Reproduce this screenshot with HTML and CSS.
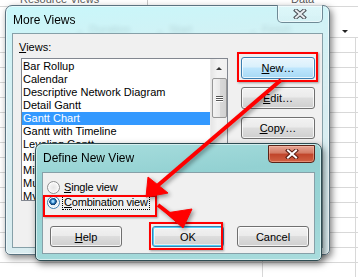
FILE: index.html
```html
<!DOCTYPE html>
<html lang="en">
<head>
  <meta charset="UTF-8" />
  <meta name="viewport" content="width=device-width, initial-scale=1.0"/>
  <title>More Views</title>
  <link rel="stylesheet" href="styles.css">
</head>
<body>
  <div class="sheet">
    <div class="sheet-top">
      <span class="tab-res">Resource Views</span>
      <span class="tab-data">Data</span>
    </div>
    <div class="col-heads">
      <span class="col col-dur"><i class="dd"></i>Duration</span>
      <span class="col col-start"><i class="dd"></i>Start</span>
      <span class="col col-fin"><i class="dd"></i>Finish</span>
      <span class="col"><i class="dd dd-dark"></i></span>
    </div>
    <div class="rows"></div>
  </div>

  <!-- back dialog -->
  <div class="win win-more">
    <div class="titlebar">
      <span class="title">More Views</span>
      <span class="close close-idle">
        <svg width="14" height="10" viewBox="0 0 14 10">
          <path d="M3 1.5 L11 8.5 M11 1.5 L3 8.5" stroke="#4b4f55" stroke-width="4" stroke-linecap="square"/>
          <path d="M3 1.5 L11 8.5 M11 1.5 L3 8.5" stroke="#e9edf0" stroke-width="2" stroke-linecap="square"/>
        </svg>
      </span>
    </div>
    <div class="client client-more">
      <div class="views">
        <div class="label"><u>V</u>iews:</div>
        <div class="listbox">
          <ul class="items">
            <li>Bar Rollup</li>
            <li>Calendar</li>
            <li>Descriptive Network Diagram</li>
            <li>Detail Gantt</li>
            <li class="sel">Gantt Chart</li>
            <li>Gantt with Timeline</li>
            <li>Leveling Gantt</li>
            <li>Milestone Date Rollup</li>
            <li>Milestone Rollup</li>
            <li>Multiple Baselines Gantt</li>
            <li>My Tasks</li>
          </ul>
          <div class="vscroll">
            <span class="sb-up"></span>
            <span class="sb-thumb"><i></i><i></i><i></i></span>
          </div>
        </div>
      </div>
      <div class="side-btns">
        <button class="btn btn-hot"><u>N</u>ew…</button>
        <button class="btn"><u>E</u>dit…</button>
        <button class="btn"><u>C</u>opy…</button>
      </div>
    </div>
  </div>

  <!-- front dialog -->
  <div class="win win-define">
    <div class="titlebar">
      <span class="title">Define New View</span>
      <span class="close close-hot">
        <svg width="14" height="10" viewBox="0 0 14 10">
          <path d="M3 1.5 L11 8.5 M11 1.5 L3 8.5" stroke="#5a1d12" stroke-width="4" stroke-linecap="square"/>
          <path d="M3 1.5 L11 8.5 M11 1.5 L3 8.5" stroke="#ffffff" stroke-width="2" stroke-linecap="square"/>
        </svg>
      </span>
    </div>
    <div class="client client-define">
      <div class="radios">
        <label class="radio"><span class="dot"></span><span><u>S</u>ingle view</span></label>
        <label class="radio"><span class="dot on"></span><span class="focus"><u>C</u>ombination view</span></label>
      </div>
      <div class="btn-row">
        <button class="btn"><u>H</u>elp</button>
        <button class="btn btn-def">OK</button>
        <button class="btn">Cancel</button>
      </div>
    </div>
  </div>

  <!-- annotations -->
  <div class="mark mark-new"></div>
  <div class="mark mark-comb"></div>
  <div class="mark mark-ok"></div>

  <svg class="arrows" width="358" height="277" viewBox="0 0 358 277">
    <g fill="#f00" stroke="#f00">
      <line x1="281" y1="80" x2="156" y2="187" stroke-width="4"/>
      <polygon points="146,197 148,177 168,193" stroke-width="1"/>
      <line x1="158" y1="205" x2="176" y2="219" stroke-width="4"/>
      <polygon points="183,228 166,213 192,209" stroke-width="1"/>
    </g>
  </svg>
</body>
</html>
```

FILE: styles.css
```css
* {
  box-sizing: border-box;
}

body {
  margin: 0;
  width: 358px;
  height: 277px;
  overflow: hidden;
  position: relative;
  background: #fff;
  font-family: 'Liberation Sans', Arial, sans-serif;
  font-size: 11px;
  color: #000;
}

u {
  text-decoration: underline;
  text-underline-offset: 1px;
}

/* spreadsheet behind the dialogs */
.sheet {
  height: 277px;
}

.sheet-top {
  display: flex;
  height: 6px;
  overflow: hidden;
  color: #5a5a5a;
  line-height: 12px;
}

.tab-res {
  width: 148px;
  padding-left: 20px;
  margin-top: -7px;
  border-right: 1px solid #c8c8c8;
}

.tab-data {
  padding-left: 143px;
  margin-top: -7px;
}

.col-heads {
  display: flex;
  height: 32px;
  padding-left: 77px;
  padding-top: 15px;
  color: #444;
  border-top: 1px solid #d8d8d8;
  border-bottom: 1px solid #d8d8d8;
}

.col {
  display: flex;
  align-items: center;
  gap: 6px;
  height: 14px;
}

.col-dur { width: 80px; }
.col-start { width: 93px; }
.col-fin { width: 92px; }

.dd {
  width: 0;
  height: 0;
  border-left: 3px solid transparent;
  border-right: 3px solid transparent;
  border-top: 3px solid #777;
  margin-top: 6px;
}

.dd-dark {
  border-top-color: #222;
  margin-top: 4px;
}

.rows {
  height: 239px;
  background:
    linear-gradient(to right, transparent 262px, #d8d8d8 262px 263px, transparent 263px 355px, #d8d8d8 355px 356px, transparent 356px),
    repeating-linear-gradient(to bottom, transparent 0 14px, #d8d8d8 14px 15px);
}

/* dialog windows */
.win {
  position: absolute;
  display: flex;
  flex-direction: column;
  padding: 0 6px 6px;
  border: 1px solid #5b7380;
  border-radius: 7px 7px 5px 5px;
  box-shadow: 2px 3px 7px rgba(0, 0, 0, 0.5), inset 0 0 0 1px rgba(255, 255, 255, 0.55);
}

.win-more {
  left: 5px;
  top: 5px;
  width: 325px;
  height: 250px;
  background: linear-gradient(175deg, rgba(190, 246, 250, 0.85), rgba(200, 240, 244, 0.85) 15%, rgba(212, 236, 240, 0.9) 40%, rgba(214, 234, 238, 0.92));
  backdrop-filter: blur(2px);
}

.win-define {
  left: 35px;
  top: 143px;
  width: 287px;
  height: 118px;
  border-color: #2e4c52;
  background: linear-gradient(175deg, #a8dede, #93d1d2 30%, #9cd5d6 70%, #a9dcdd);
}

.titlebar {
  display: flex;
  align-items: flex-start;
  height: 27px;
  flex-shrink: 0;
}

.win-define .titlebar {
  height: 28px;
}

.title {
  padding: 7px 0 0 1px;
  font-size: 12px;
  line-height: 14px;
}

.close {
  margin-left: auto;
  margin-top: -1px;
  width: 46px;
  height: 18px;
  display: flex;
  align-items: center;
  justify-content: center;
  border: 1px solid #6f8a96;
  border-top: none;
  border-radius: 0 0 5px 5px;
}

.close-idle {
  background: linear-gradient(rgba(255, 255, 255, 0.35), rgba(220, 240, 244, 0.4));
  box-shadow: inset 0 0 0 1px rgba(255, 255, 255, 0.5);
}

.close-hot {
  width: 47px;
  margin-top: 1px;
  border: 1px solid #5a2318;
  border-radius: 0 0 4px 4px;
  background: linear-gradient(#e8a595, #d37a63 45%, #c0442a 50%, #d06244);
  box-shadow: inset 0 0 0 1px rgba(255, 200, 180, 0.45);
}

.client {
  flex: 1;
  border: 1px solid #86a0a8;
  background: #f0f0f0;
}

/* More Views content */
.client-more {
  display: flex;
  padding: 7px 6px 0;
}

.label {
  line-height: 13px;
}

.listbox {
  display: flex;
  margin: 4px 0 0 2px;
  width: 207px;
  height: 143px;
  border: 1px solid #828790;
  background: #fff;
}

.items {
  list-style: none;
  margin: 0;
  padding: 1px 0 0;
  width: 189px;
  line-height: 13px;
  white-space: nowrap;
  overflow: hidden;
}

.items li {
  padding-left: 1px;
}

.items .sel {
  background: #3399ff;
  color: #fff;
}

.vscroll {
  width: 17px;
  display: flex;
  flex-direction: column;
  align-items: center;
  background: linear-gradient(to right, #e6e6e6, #f3f3f3 40%, #f0f0f0);
  border-left: 1px solid #ececec;
}

.sb-up {
  margin-top: 8px;
  width: 0;
  height: 0;
  border-left: 3px solid transparent;
  border-right: 3px solid transparent;
  border-bottom: 3px solid #333;
}

.sb-thumb {
  margin-top: 8px;
  width: 15px;
  height: 40px;
  border: 1px solid #979797;
  border-radius: 2px;
  background: linear-gradient(to right, #f3f3f3, #e8e8e8 50%, #d9d9d9 51%, #d2d2d2);
  display: flex;
  flex-direction: column;
  align-items: center;
  justify-content: center;
  gap: 1px;
}

.sb-thumb i {
  width: 7px;
  height: 1px;
  background: #555;
  box-shadow: 0 1px 0 #fff;
}

.side-btns {
  display: flex;
  flex-direction: column;
  gap: 8px;
  margin: 16px 0 0 13px;
}

.btn {
  width: 74px;
  height: 22px;
  padding: 0;
  border: 1px solid #707070;
  border-radius: 3px;
  background: linear-gradient(#f2f2f2, #ebebeb 45%, #dddddd 50%, #cfcfcf);
  box-shadow: inset 0 0 0 1px rgba(255, 255, 255, 0.75);
  font-family: 'Liberation Sans', Arial, sans-serif;
  font-size: 11px;
  color: #000;
}

.btn-hot {
  border-color: #3c7fb1;
  background: linear-gradient(#eaf6fd, #d9f0fc 45%, #bee6fd 50%, #a7d9f5);
}

.btn-def {
  border-color: #3c7fb1;
  box-shadow: inset 0 0 0 1px #48d0fa, inset 0 0 0 2px rgba(255, 255, 255, 0.6);
}

/* Define New View content */
.client-define {
  display: flex;
  flex-direction: column;
  padding: 8px 0 0 4px;
}

.radios {
  display: flex;
  flex-direction: column;
  gap: 2px;
}

.radio {
  display: flex;
  align-items: center;
  gap: 4px;
  height: 13px;
  line-height: 13px;
  letter-spacing: -0.2px;
}

.dot {
  width: 13px;
  height: 13px;
  border-radius: 50%;
  border: 1px solid #8e8f8f;
  background: radial-gradient(circle at 50% 50%, #e6e6e6, #f6f6f6 60%, #dcdcdc);
  box-shadow: inset 0 0 0 1px #fff;
}

.dot.on {
  border-color: #3c7fb1;
  background: radial-gradient(circle at 45% 40%, #9fd9ff 0 1px, #2a7cc0 2px, #0d3c6e 3.5px, #e9f1f6 4px, #d6e4ee);
}

.focus {
  outline: 1px dotted #000;
  outline-offset: 0;
  padding: 0 1px;
  margin-left: -1px;
}

.btn-row {
  display: flex;
  margin: 17px 0 0 3px;
}

.btn-row .btn {
  width: 72px;
  height: 21px;
}

.btn-row .btn-def {
  margin-left: 30px;
  margin-right: 13px;
}

/* red annotations */
.mark {
  position: absolute;
  border: 2px solid #f00;
  box-shadow: 1px 1px 2px rgba(0, 0, 0, 0.35);
}

.mark-new {
  left: 237px;
  top: 52px;
  width: 81px;
  height: 30px;
}

.mark-comb {
  left: 43px;
  top: 195px;
  width: 114px;
  height: 22px;
}

.mark-ok {
  left: 149px;
  top: 222px;
  width: 74px;
  height: 28px;
}

.arrows {
  position: absolute;
  left: 0;
  top: 0;
  filter: drop-shadow(2px 2px 2px rgba(0, 0, 0, 0.4));
}
```
